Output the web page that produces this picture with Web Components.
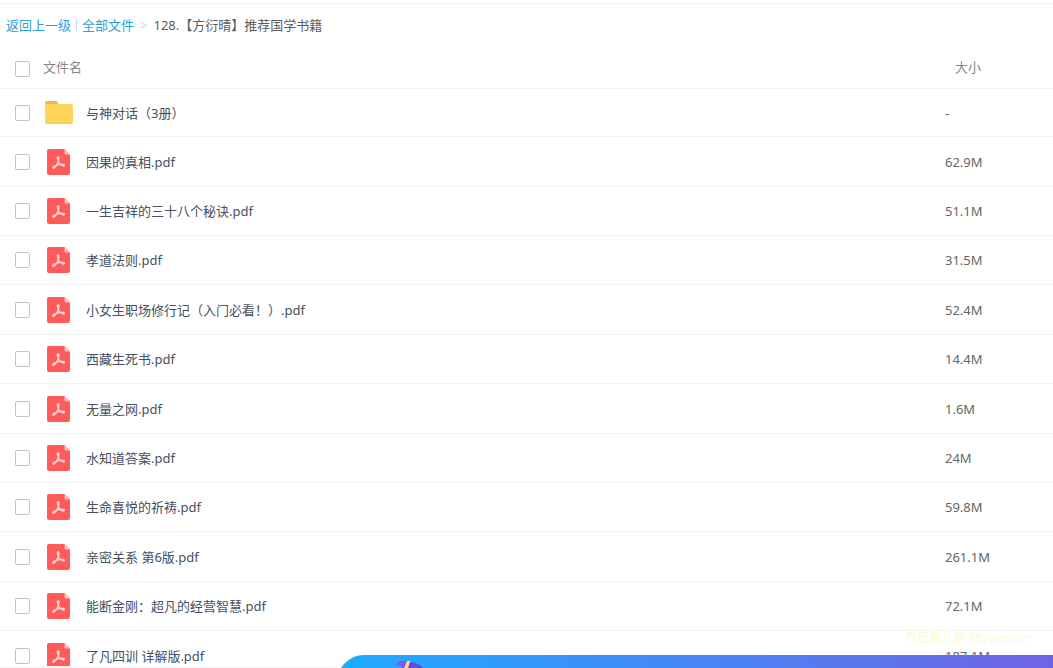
<!DOCTYPE html>
<html lang="zh-CN">
<head>
<meta charset="utf-8">
<title>全部文件</title>
<style>
    html {
        height: 100%;
        overflow: hidden;
    }

    body {
        margin: 0;
        height: 100%;
        overflow: hidden;
        background: #fff;
        color: #465060;
        font: 13px/20px "Noto Sans", "Noto Sans CJK SC", sans-serif;
    }
</style>
</head>
<body>
<file-browser>
    <path-bar slot="path">
        <a href="#up">返回上一级</a>
        <a href="#all">全部文件</a>
        <span>128.【方衍晴】推荐国学书籍</span>
    </path-bar>
    <file-table></file-table>
</file-browser>
<site-mark>巴巴育儿网 88yuer.com</site-mark>
<promo-bar></promo-bar>

<script>
const files = [
    ['folder', '与神对话（3册）', '-'],
    ['pdf', '因果的真相.pdf', '62.9M'],
    ['pdf', '一生吉祥的三十八个秘诀.pdf', '51.1M'],
    ['pdf', '孝道法则.pdf', '31.5M'],
    ['pdf', '小女生职场修行记（入门必看！）.pdf', '52.4M'],
    ['pdf', '西藏生死书.pdf', '14.4M'],
    ['pdf', '无量之网.pdf', '1.6M'],
    ['pdf', '水知道答案.pdf', '24M'],
    ['pdf', '生命喜悦的祈祷.pdf', '59.8M'],
    ['pdf', '亲密关系 第6版.pdf', '261.1M'],
    ['pdf', '能断金刚：超凡的经营智慧.pdf', '72.1M'],
    ['pdf', '了凡四训 详解版.pdf', '187.1M']
];

class FileBrowser extends HTMLElement {
    constructor() {
        super();
        this.attachShadow({ mode: 'open' });
    }

    connectedCallback() {
        this.shadowRoot.innerHTML = `
            <style>
                :host {
                    display: block;
                    padding-top: 3px;
                }

                main {
                    border-top: 1px solid #f2f4f5;
                }
            </style>
            <main>
                <slot name="path"></slot>
                <slot></slot>
            </main>
        `;
    }
}

class PathBar extends HTMLElement {
    constructor() {
        super();
        this.attachShadow({ mode: 'open' });
    }

    connectedCallback() {
        this.shadowRoot.innerHTML = `
            <style>
                :host {
                    display: block;
                }

                nav {
                    display: flex;
                    align-items: center;
                    height: 42px;
                    padding-left: 6px;
                    color: #5c5c5c;
                    white-space: nowrap;
                }

                a {
                    color: #2e9fd8;
                    text-decoration: none;
                }

                .bar {
                    margin: 0 5px;
                    width: 1px;
                    height: 12px;
                    background: #c4dbfe;
                }

                .arrow {
                    margin: 0 6px;
                    color: #c4d8ee;
                }
            </style>
            <nav></nav>
        `;

        const nav = this.shadowRoot.querySelector('nav');
        const marks = ['', '<span class="bar"></span>', '<span class="arrow">&gt;</span>'];
        [...this.children].forEach((item, i) => {
            nav.insertAdjacentHTML('beforeend', marks[i]);
            nav.append(item);
        });
    }
}

class FileIcon extends HTMLElement {
    constructor() {
        super();
        this.attachShadow({ mode: 'open' });
    }

    connectedCallback() {
        const folder = `
            <svg width="28" height="24" viewBox="0 0 28 24">
                <path d="M0 2Q0 0 2 0H11Q13 0 13 2V8H0z" fill="#e5bd50"/>
                <rect y="3" width="28" height="20" rx="2" fill="#ffd659"/>
                <path d="M1 22.500H27" stroke="#f6cd52"/>
            </svg>
        `;
        const pdf = `
            <svg width="24" height="26" viewBox="0 0 24 26">
                <path d="M2 0H17.500L23 5.500V24Q23 26 21 26H2Q0 26 0 24V2Q0 0 2 0z" fill="#ff5b5b"/>
                <path d="M17.500 0V4Q17.500 5.500 19 5.500H23z" fill="#ffb9b9"/>
                <path d="M10.300 8.300Q11.700 7 12 9Q12.200 12.500 9.600 16.200Q7.800 19.500 6.300 19.300Q4.800 18.500 7.300 17Q11.500 15 16 15.400Q18.600 16.200 16.500 17.200Q13.300 16.500 11.600 13.200Q10.600 11 10.300 8.300z" fill="none" stroke="#ffdede" stroke-width="1.300" stroke-linejoin="round"/>
            </svg>
        `;
        this.shadowRoot.innerHTML = `
            <style>
                :host {
                    display: flex;
                    justify-content: center;
                    width: 32px;
                }

                svg {
                    display: block;
                }
            </style>
            ${this.getAttribute('type') === 'folder' ? folder : pdf}
        `;
    }
}

class FileTable extends HTMLElement {
    constructor() {
        super();
        this.attachShadow({ mode: 'open' });
    }

    connectedCallback() {
        const rows = files.map(([type, name, size], i) => `
            <tr>
                <td><input type="checkbox" id="file${i}"></td>
                <td>
                    <div class="name">
                        <file-icon type="${type}"></file-icon>
                        <label for="file${i}">${name}</label>
                    </div>
                </td>
                <td class="size">${size}</td>
            </tr>
        `).join('');

        this.shadowRoot.innerHTML = `
            <style>
                :host {
                    display: block;
                }

                table {
                    width: 100%;
                    table-layout: fixed;
                    border-collapse: separate;
                    border-spacing: 0;
                }

                .check-col {
                    width: 43px;
                }

                .size-col {
                    width: 108px;
                }

                th,
                td {
                    box-sizing: border-box;
                    height: 49px;
                    padding: 0;
                    border-bottom: 1px solid #f2f4f5;
                    text-align: left;
                    vertical-align: middle;
                    white-space: nowrap;
                }

                th {
                    height: 43px;
                    color: #888;
                    font-weight: normal;
                }

                th:last-child {
                    padding-left: 10px;
                }

                tbody tr:first-child td {
                    height: 48px;
                }

                tbody tr:nth-child(5n) td,
                tbody tr:nth-child(5n + 2) td {
                    height: 50px;
                }

                input {
                    display: block;
                    appearance: none;
                    box-sizing: border-box;
                    width: 15px;
                    height: 16px;
                    margin: 0 0 0 15px;
                    border: 1px solid #bcc5d0;
                    border-radius: 2px;
                    background: #fff;
                    cursor: pointer;
                }

                input:checked {
                    background: #2e9fd8;
                }

                th input {
                    margin-top: 3px;
                }

                .name {
                    display: flex;
                    align-items: center;
                    gap: 11px;
                }

                .size {
                    color: #666;
                }
            </style>
            <table>
                <colgroup>
                    <col class="check-col">
                    <col>
                    <col class="size-col">
                </colgroup>
                <thead>
                    <tr>
                        <th><input type="checkbox" id="all" aria-label="全选"></th>
                        <th><label for="all">文件名</label></th>
                        <th>大小</th>
                    </tr>
                </thead>
                <tbody>${rows}</tbody>
            </table>
        `;

        const all = this.shadowRoot.querySelector('#all');
        all.addEventListener('change', () => {
            this.shadowRoot.querySelectorAll('td input').forEach(box => {
                box.checked = all.checked;
            });
        });
    }
}

class SiteMark extends HTMLElement {
    constructor() {
        super();
        this.attachShadow({ mode: 'open' });
    }

    connectedCallback() {
        this.shadowRoot.innerHTML = `
            <style>
                :host {
                    position: fixed;
                    right: 20px;
                    bottom: 23px;
                    color: #fafad2;
                    font-size: 12px;
                    line-height: 14px;
                    pointer-events: none;
                }
            </style>
            <slot></slot>
        `;
    }
}

class PromoBar extends HTMLElement {
    constructor() {
        super();
        this.attachShadow({ mode: 'open' });
    }

    connectedCallback() {
        this.shadowRoot.innerHTML = `
            <style>
                :host {
                    position: fixed;
                    left: 0;
                    right: 0;
                    bottom: 0;
                    display: flex;
                    align-items: flex-end;
                    height: 13px;
                    overflow: hidden;
                }

                .edge {
                    flex: 0 0 32%;
                    height: 2px;
                    background: #f6f6f6;
                }

                .banner {
                    flex: 1;
                    align-self: flex-start;
                    height: 54px;
                    border-radius: 27px 0 0 27px;
                    background: linear-gradient(90deg, #1eabff, #7062e6);
                }

                svg {
                    display: block;
                    margin: 5px 0 0 59px;
                }
            </style>
            <div class="edge"></div>
            <div class="banner">
                <svg width="30" height="8" viewBox="0 0 30 8">
                    <path d="M1 4L5 1L14 2L22 4Q25 5 27 8H7L6 6z" fill="#6b45d8"/>
                    <path d="M0 4L4 1L11 2L8 6z" fill="#8b55e6"/>
                    <path d="M11 1Q14 0 14 2L12 8H8z" fill="#f6dc9c"/>
                </svg>
            </div>
        `;
    }
}

customElements.define('file-browser', FileBrowser);
customElements.define('path-bar', PathBar);
customElements.define('file-icon', FileIcon);
customElements.define('file-table', FileTable);
customElements.define('site-mark', SiteMark);
customElements.define('promo-bar', PromoBar);
</script>
</body>
</html>
